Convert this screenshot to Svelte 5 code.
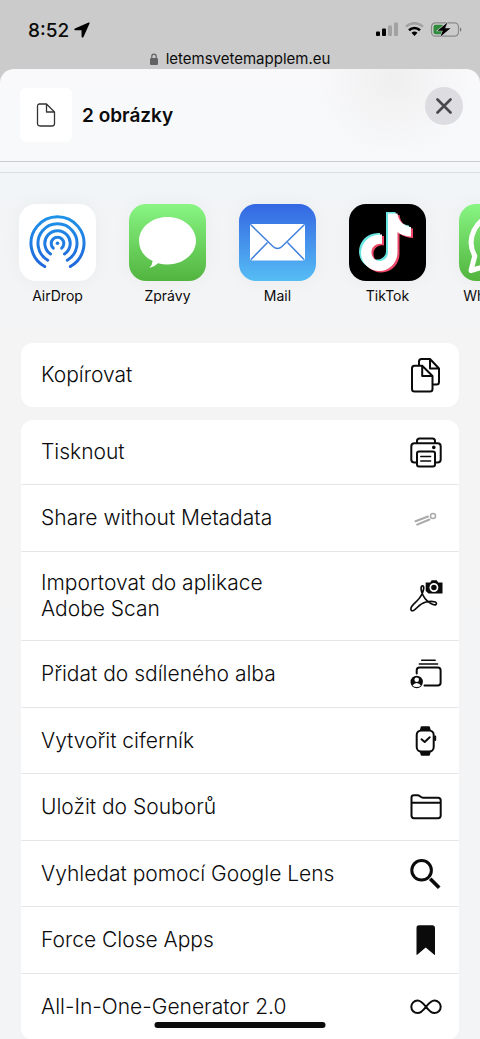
<script>
	/**
	 * @typedef {Object} Item
	 * @property {string} icon - Icon key
	 * @property {string} label - Visible label
	 */

	/** @type {Item[]} */
	const apps = [
		{ icon: 'airdrop', label: 'AirDrop' },
		{ icon: 'messages', label: 'Zprávy' },
		{ icon: 'mail', label: 'Mail' },
		{ icon: 'tiktok', label: 'TikTok' },
		{ icon: 'whatsapp', label: 'WhatsApp' }
	];

	/** @type {Item[][]} */
	const groups = [
		[{ icon: 'copy', label: 'Kopírovat' }],
		[
			{ icon: 'print', label: 'Tisknout' },
			{ icon: 'metadata', label: 'Share without Metadata' },
			{ icon: 'scan', label: 'Importovat do aplikace\nAdobe Scan' },
			{ icon: 'album', label: 'Přidat do sdíleného alba' },
			{ icon: 'watch', label: 'Vytvořit ciferník' },
			{ icon: 'folder', label: 'Uložit do Souborů' },
			{ icon: 'lens', label: 'Vyhledat pomocí Google Lens' },
			{ icon: 'bookmark', label: 'Force Close Apps' },
			{ icon: 'infinity', label: 'All-In-One-Generator 2.0' }
		]
	];

	const notePath =
		'M37 8h9.500c.8 7.500 6 12.700 13.500 13.500V31c-5 0-10-1.700-13.500-4.300V47c0 10-8 18.500-18 18.500S10 57.500 10 47.500c0-10.500 9-19.500 21-18.500v9.500c-6-1-10.500 3-10.500 8.500 0 5 4 8.500 8 8.500s8.500-3 8.500-8.500z';
</script>

<svelte:head>
	<title>2 obrázky</title>
</svelte:head>

<div class="screen">
	<header class="status">
		<div class="status-row">
			<div class="clock">
				<span>8:52</span>
				<svg width="16" height="16" viewBox="0 0 16 16" aria-hidden="true">
					<path d="M14.6.5.9 6.5C0 7 .2 8.2 1.200 8.200H7.500L7.600 14.500C7.600 15.700 9 15.900 9.500 14.900L15.500 1.500C15.800.7 15.300.2 14.600.5Z" />
				</svg>
			</div>
			<svg class="indicators" width="86" height="16" viewBox="0 0 86 16" aria-hidden="true">
				<rect x="0" y="9.500" width="4" height="4.500" rx="1" />
				<rect x="6" y="6.500" width="4" height="7.500" rx="1" />
				<rect x="12" y="3.500" width="4" height="10.500" rx="1" fill="#a2a2a2" />
				<rect x="18" y=".500" width="4" height="13.500" rx="1" fill="#a2a2a2" />
				<path d="M30 4.600a12.400 12.400 0 0 1 17 0" fill="none" stroke="#a2a2a2" stroke-width="2.600" />
				<path d="M33 8.200a8 8 0 0 1 11 0" fill="none" stroke="#000" stroke-width="2.600" />
				<path d="m38.500 14-3-3.200a4.500 4.500 0 0 1 6 0z" />
				<rect x="55.500" y=".800" width="27" height="13.400" rx="4" fill="none" stroke="#8b8b8b" stroke-width="1.200" />
				<path d="M84 5.200c1.800.8 1.800 3.800 0 4.600z" fill="#777" />
				<rect x="57.500" y="2.800" width="10" height="9.400" rx="2" fill="#2f8c3c" />
				<path d="m71.500.5-10 8.200h5.300l-2.500 6 10.200-8.400H69z" stroke="#cbcbcb" stroke-width="1.200" paint-order="stroke" />
			</svg>
		</div>
		<div class="address">
			<svg width="8" height="12" viewBox="0 0 8 12" aria-hidden="true">
				<path d="M1.800 6V3.300a2.200 2.200 0 0 1 4.400 0V6" fill="none" stroke="#626264" stroke-width="1.200" />
				<rect y="5" width="8" height="7" rx="1.200" fill="#626264" />
			</svg>
			<span>letemsvetemapplem.eu</span>
		</div>
	</header>

	<main class="sheet">
		<div class="title-bar">
			<div class="thumb">
				<svg width="20" height="24" viewBox="0 0 20 24" fill="none" stroke="#333" stroke-width="1.300" stroke-linejoin="round" aria-hidden="true">
					<path d="M3.500 1H10.500L18.500 9V20.500Q18.500 23 16 23H4Q1.500 23 1.500 20.500V3.500Q1.500 1 3.500 1ZM10.500 1V9H18.500" />
				</svg>
			</div>
			<h1>2 obrázky</h1>
			<button class="close" aria-label="Zavřít">
				<svg width="16" height="16" viewBox="0 0 16 16" fill="none" stroke="#48484b" stroke-width="2.600" stroke-linecap="round" aria-hidden="true">
					<path d="m1.500 1.500 13 13m0-13-13 13" />
				</svg>
			</button>
		</div>
		<div class="divider"></div>

		<nav class="apps" aria-label="Aplikace">
			{#each apps as app (app.icon)}
				<button class="app">
					<span class="tile {app.icon}">
						<svg width="77" height="77" viewBox="0 0 77 77" aria-hidden="true">
							{#if app.icon === 'airdrop'}
								<defs>
									<linearGradient id="air" gradientUnits="userSpaceOnUse" x1="0" y1="11" x2="0" y2="65">
										<stop offset="0" stop-color="#1f94e8" />
										<stop offset="1" stop-color="#2165dc" />
									</linearGradient>
								</defs>
								<g fill="none" stroke="url(#air)" stroke-width="3" stroke-linecap="round">
									<path d="M25.700 62.500A26.500 26.500 0 1 1 51.300 62.500" />
									<path d="M28.700 56.200A19.500 19.500 0 1 1 48.300 56.200" />
									<path d="M31.500 50A12.700 12.700 0 1 1 45.500 50" />
									<path d="M34.300 44.200A6.300 6.300 0 1 1 42.700 44.200" />
								</g>
								<circle cx="38.500" cy="39.300" r="1.800" fill="#1d7ce2" />
							{:else if app.icon === 'messages'}
								<path d="M38.500 13C54 13 67 23.500 67 36.800S54 60.500 38.500 60.500q-5 0-9.500-1.300Q25 63.300 20.300 64q3-3 3.300-7C15 53 10 45.500 10 36.800 10 23.500 23 13 38.500 13Z" fill="#fff" />
							{:else if app.icon === 'mail'}
								<rect x="11" y="20" width="55" height="36.500" rx="2.500" fill="#fff" />
								<path d="m12 21 22 21.500q4.500 4 9 0L65 21M12 55.500 28.500 38.500m20 0L65 55.500" fill="none" stroke="#4080dc" stroke-width="1.500" />
							{:else if app.icon === 'tiktok'}
								<path d={notePath} fill="#67e5e2" />
								<path d={notePath} fill="#ed4867" transform="translate(4 3)" />
								<path d={notePath} fill="#fff" transform="translate(2 1.500)" />
							{:else}
								<path d="M12 66.500 15.800 52A27.500 27.500 0 1 1 26 62.300Z" fill="none" stroke="#fff" stroke-width="5" stroke-linejoin="round" />
								<path d="M29 25c-5 4-2 11 4 17s14 11 19 7c3-2 3-5 2-6l-6-3c-2-1-3 2-5 3-3 0-9-6-10-9 1-2 3-3 2-5l-2-5c-1-1-3 0-4 1Z" fill="#fff" />
							{/if}
						</svg>
					</span>
					<span class="app-label">{app.label}</span>
				</button>
			{/each}
		</nav>

		{#each groups as group}
			<div class="card">
				{#each group as action (action.icon)}
					<button class="row">
						<span class="row-label">{action.label}</span>
						<svg class="glyph" width="36" height="36" viewBox="0 0 36 36" aria-hidden="true">
							{#if action.icon === 'copy'}
								<path d="M11 8V4.500Q11 2 13.500 2H22L31 11.500V25Q31 27.500 28.500 27.500H25M22 2V11.500H31" />
								<path d="M6.500 8.800H14.200L24.500 19V32Q24.500 34.500 22 34.500H6.500Q4 34.500 4 32V11.300Q4 8.800 6.500 8.800ZM14.200 8.800V19H24.500" fill="#fff" />
							{:else if action.icon === 'print'}
								<path d="M9 9V7Q9 4.500 11.500 4.500H24.500Q27 4.500 27 7V9" />
								<path d="M9 28.500H6.500Q3.300 28.500 3.300 25.500V12.500Q3.300 9.300 6.500 9.300H29.500Q32.700 9.300 32.700 12.500V25.500Q32.700 28.500 29.500 28.500H27" />
								<rect x="9" y="17.500" width="18" height="15" rx="2" />
								<path d="M12.700 22.500h10M12.700 27h10" stroke-width="1.300" />
								<circle class="solid" cx="25.800" cy="13.400" r="1.800" />
							{:else if action.icon === 'metadata'}
								<g stroke="#aaa">
									<path d="m7.500 21.300 12.500-4.800M9.200 24.700l12.300-5.200" />
									<circle cx="25" cy="16" r="2.500" stroke-width="1.500" />
								</g>
							{:else if action.icon === 'scan'}
								<path d="M3 30C4 26 11 23 14 16 17 9 15.500 7.500 14 8 12 9 13.500 16 17 20.500 20 24.500 26 28 28 26.500 30 24 25 22.500 18 24 11 25.500 9 31 5.500 32.500 3.500 33.300 2.500 32 3 30Z" stroke-width="1.700" />
								<path class="solid" d="M17.700 4.500h4.500l1.500-2.300h5l1.500 2.300h4.300v11H20.500L17.700 13z" />
								<circle cx="25.900" cy="9.500" r="3.600" stroke="#fff" stroke-width="1.700" />
							{:else if action.icon === 'album'}
								<path d="M13.700 4.300h13.500M11.300 7.900h18.300" stroke-width="1.500" />
								<path d="M8.700 17.500V14.300Q8.700 11.500 11.500 11.500H29.800Q32.600 11.500 32.600 14.300V26.700Q32.600 29.500 29.800 29.500H16.500" />
								<circle class="solid" cx="8.700" cy="26" r="6.200" />
								<path d="M4.500 29.500q1.500-2.500 4.200-2.500t4.200 2.500Q11.500 31 8.700 31t-4.200-1.500Z" fill="#fff" stroke="none" />
								<circle cx="8.700" cy="23.800" r="2.300" fill="#fff" stroke="none" />
							{:else if action.icon === 'watch'}
								<path class="solid" d="m11.800 7.500.8-3.200q.2-1 1.200-1h7q1 0 1.200 1l.8 3.200zM11.800 28.500l.8 3.200q.2 1 1.200 1h7q1 0 1.200-1l.8-3.200z" />
								<rect x="8.700" y="7.500" width="17" height="21" rx="4.500" fill="#fff" />
								<path d="M27.200 13.500V17M13.500 16.300l3.200 2.700 5-4.700" />
							{:else if action.icon === 'folder'}
								<path d="M3.500 13.700V8.500Q3.500 6.300 6 6.300H9.500C12 6.300 12.500 8.700 15 8.700H30Q32.700 8.700 32.700 11.300V26.500Q32.700 29.200 30 29.200H6Q3.500 29.200 3.500 26.500ZM3.500 13.800H32.700" />
							{:else if action.icon === 'lens'}
								<circle cx="13.600" cy="14.300" r="9.800" stroke-width="3" />
								<path d="m22.200 22.800 9 9" stroke-width="3.700" stroke-linecap="butt" />
							{:else if action.icon === 'bookmark'}
								<path class="solid" d="M11 3.300H24.600Q27 3.300 27 5.800V32.200Q27 33.500 26 32.600L17.700 25.500 9.500 32.600Q8.500 33.500 8.500 32.200V5.800Q8.500 3.300 11 3.300Z" />
							{:else}
								<path d="M18 17.800C15 14 12.800 11.500 9.600 11.500a6.300 6.300 0 0 0 0 12.600C12.800 24.100 15 21.600 18 17.800S23.200 11.500 26.400 11.500a6.300 6.300 0 0 1 0 12.600C23.200 24.100 21 21.600 18 17.800Z" />
							{/if}
						</svg>
					</button>
				{/each}
			</div>
		{/each}
	</main>

	<div class="home-indicator"></div>
</div>

<style>
	:global(body) {
		background: #cbcbcb;
	}

	.screen {
		position: relative;
		display: flex;
		flex-direction: column;
		height: 100vh;
		overflow: hidden;
		color: #0b0b0c;
		font-family: Inter, 'Noto Sans', sans-serif;
	}

	button {
		padding: 0;
		border: 0;
		background: none;
		color: inherit;
		font: inherit;
		cursor: pointer;
	}

	svg {
		display: block;
		flex: none;
	}

	.status {
		flex: none;
		height: 69px;
		box-sizing: border-box;
		padding-top: 18px;
	}

	.status-row {
		display: flex;
		align-items: center;
		justify-content: space-between;
		height: 24px;
		padding: 0 18px 0 28px;
	}

	.clock {
		display: flex;
		align-items: center;
		gap: 5px;
		font-size: 19px;
		font-weight: 500;
	}

	.address {
		display: flex;
		align-items: center;
		justify-content: center;
		gap: 8px;
		margin-top: 8px;
		font-size: 15px;
		line-height: 18px;
	}

	.sheet {
		flex: 1;
		min-height: 0;
		overflow: hidden;
		border-radius: 14px 14px 0 0;
		background:
			radial-gradient(circle at 82% 10px, #f0eff0, transparent 80px),
			linear-gradient(#f9f9fb, #f7f9fa 90px, #f1f5f7 105px, #f3f4f5 180px, #f4f4f5 300px, #f3f4f5);
	}

	.title-bar {
		display: flex;
		align-items: center;
		height: 92px;
		padding: 0 17px 0 20px;
		border-bottom: 1px solid #c9cccf;
	}

	.thumb {
		display: flex;
		align-items: center;
		justify-content: center;
		width: 52px;
		height: 54px;
		border-radius: 6px;
		background: #fff;
	}

	h1 {
		flex: 1;
		margin: 0 0 0 10px;
		font-size: 19px;
		font-weight: 600;
	}

	.close {
		display: flex;
		align-items: center;
		justify-content: center;
		align-self: flex-start;
		width: 38px;
		height: 38px;
		margin-top: 18px;
		border-radius: 50%;
		background: #dddce0;
	}

	.divider {
		height: 10px;
		border-bottom: 1px solid #d9dee1;
	}

	.apps {
		display: flex;
		gap: 33px;
		padding: 31px 19px 38px;
		overflow: hidden;
	}

	.app {
		flex: none;
		display: flex;
		flex-direction: column;
		align-items: center;
		width: 77px;
	}

	.tile {
		border-radius: 17px;
		overflow: hidden;
		box-shadow: 0 0 20px rgba(0, 0, 0, 0.04);
	}

	.airdrop {
		background: #fff;
	}

	.messages,
	.whatsapp {
		background: linear-gradient(#88f583, #52b43f);
	}

	.mail {
		background: linear-gradient(#3467e3, #56bdf4);
	}

	.tiktok {
		background: #000;
	}

	.app-label {
		margin-top: 6px;
		font-size: 14px;
		line-height: 18px;
	}

	.card {
		margin: 0 21px 13px;
		border-radius: 12px;
		background: #fff;
		overflow: hidden;
	}

	.row {
		display: flex;
		align-items: center;
		justify-content: space-between;
		width: 100%;
		min-height: 66px;
		box-sizing: border-box;
		padding: 18px 15px 18px 20px;
		border-bottom: 1px solid #e6e6e8;
		font-size: 21px;
		font-weight: 300;
		line-height: 26px;
		text-align: left;
	}

	.row:nth-child(even) {
		min-height: 67px;
	}

	.row:first-child {
		min-height: 65px;
		padding-block: 14px;
	}

	.row:last-child {
		border-bottom: 0;
	}

	.row:only-child {
		min-height: 64px;
	}

	.row-label {
		white-space: pre-line;
	}

	.glyph {
		margin-block: -5px;
		fill: none;
		stroke: #0b0b0c;
		stroke-width: 2;
		stroke-linecap: round;
		stroke-linejoin: round;
	}

	.solid {
		fill: #0b0b0c;
		stroke: none;
	}

	.home-indicator {
		position: absolute;
		bottom: 11px;
		left: 50%;
		width: 171px;
		height: 6px;
		border-radius: 3px;
		background: #0b0b0c;
		transform: translateX(-50%);
	}
</style>
